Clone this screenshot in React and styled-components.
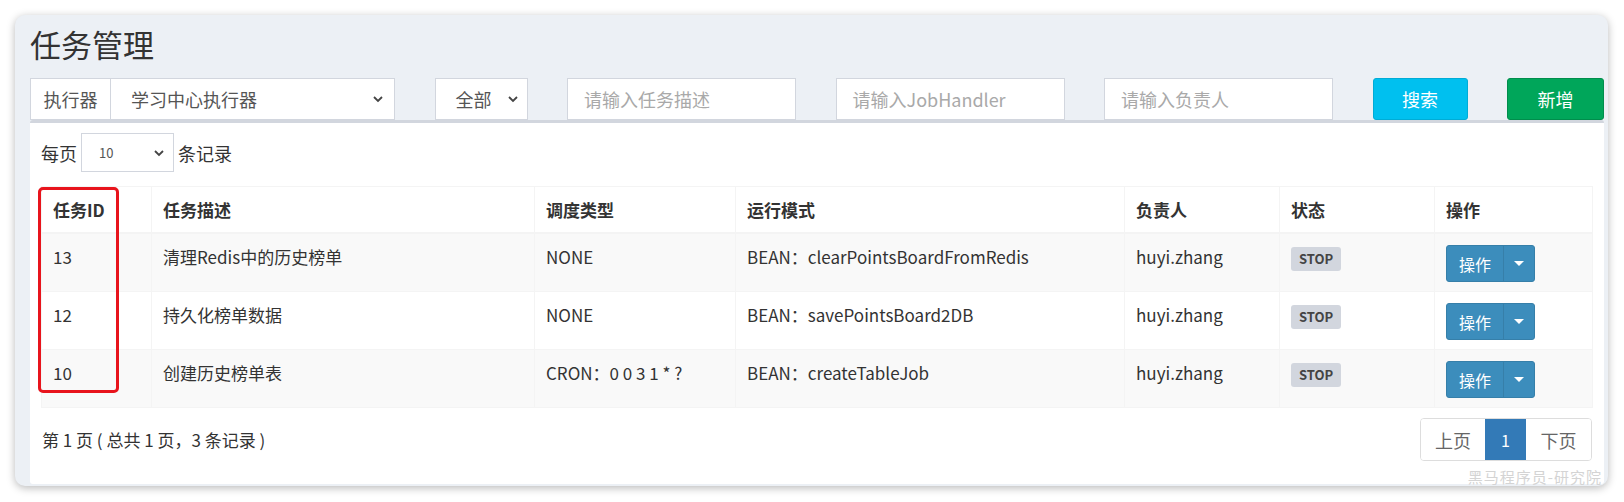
import React from "react";
import styled, { createGlobalStyle } from "styled-components";

const GlobalStyle = createGlobalStyle`
  body {
    margin: 0;
    background: #fff;
    font-family: "Noto Sans CJK SC", "Noto Sans", sans-serif;
    color: #333;
  }
`;

const Page = styled.div`
  padding: 15px 16px 17px 15px;
`;

const Card = styled.div`
  position: relative;
  background: #ecf0f5;
  border-radius: 10px;
  box-shadow: 0 2px 8px rgba(0, 0, 0, 0.28);
  padding: 9px 4px 2px 15px;
`;

const Title = styled.h1`
  margin: 0 0 14px;
  font-size: 31px;
  line-height: 40px;
  font-weight: 400;
  color: #333;
`;

const Filters = styled.div`
  display: flex;
  justify-content: space-between;
  height: 42px;
`;

const Group = styled.div`
  display: flex;
  width: 365px;
`;

const Addon = styled.div`
  width: 81px;
  box-sizing: border-box;
  display: flex;
  align-items: center;
  justify-content: center;
  background: #fff;
  border: 1px solid #d2d6de;
  font-size: 18px;
  color: #555;
`;

const SelectBox = styled.div`
  width: ${(p) => p.$w}px;
  height: ${(p) => p.$h || 42}px;
  box-sizing: border-box;
  display: flex;
  align-items: center;
  justify-content: space-between;
  padding: 0 ${(p) => p.$pr || 10}px 0 ${(p) => p.$pl || 20}px;
  background: #fff;
  border: 1px solid #d2d6de;
  border-left-width: ${(p) => (p.$noLeft ? 0 : 1)}px;
  font-size: ${(p) => p.$fs || 18}px;
  color: #555;
`;

const Input = styled.div`
  width: 229px;
  box-sizing: border-box;
  display: flex;
  align-items: center;
  padding: 0 16px;
  background: #fff;
  border: 1px solid #d2d6de;
  font-size: 18px;
  color: #a9a9a9;
`;

const Button = styled.div`
  width: ${(p) => p.$w}px;
  box-sizing: border-box;
  display: flex;
  align-items: center;
  justify-content: center;
  border-radius: 3px;
  background: ${(p) => p.$bg};
  border: 1px solid ${(p) => p.$bd};
  color: #fff;
  font-size: 18px;
`;

const Box = styled.div`
  background: #fff;
  border-top: 3px solid #d2d6de;
  border-radius: 3px;
  padding: 10px 12px 23px 11px;
`;

const LengthRow = styled.div`
  display: flex;
  align-items: center;
  gap: 4px;
  font-size: 18px;
  color: #333;
  height: 39px;
`;

const TableWrap = styled.div`
  position: relative;
  margin-top: 14px;
`;

const Table = styled.table`
  width: 1551px;
  table-layout: fixed;
  border-collapse: collapse;
  font-size: 17px;
  color: #333;
`;

const Th = styled.th`
  text-align: left;
  font-weight: 700;
  font-size: 17px;
  padding: 11px 11px 10px;
  line-height: 24px;
  border: 1px solid #f4f4f4;
  border-bottom: 2px solid #f4f4f4;
`;

const Tr = styled.tr`
  background: ${(p) => (p.$odd ? "#f9f9f9" : "#fff")};
`;

const Td = styled.td`
  vertical-align: top;
  padding: 11px 11px 9px;
  line-height: 24px;
  height: 37px;
  border: 1px solid #f4f4f4;
  white-space: nowrap;
`;

const Badge = styled.span`
  display: inline-block;
  margin-top: 1px;
  padding: 0 8px;
  height: 24px;
  line-height: 24px;
  border-radius: 3px;
  background: #d2d6de;
  color: #444;
  font-size: 13px;
  font-weight: 700;
`;

const BtnGroup = styled.div`
  display: inline-flex;
  height: 37px;
  border-radius: 3px;
  overflow: hidden;
  background: #3c8dbc;
  border: 1px solid #367fa9;
  box-sizing: border-box;
`;

const BtnMain = styled.div`
  width: 56px;
  display: flex;
  align-items: center;
  justify-content: center;
  color: #fff;
  font-size: 16px;
  border-right: 1px solid #367fa9;
`;

const BtnCaret = styled.div`
  width: 30px;
  display: flex;
  align-items: center;
  justify-content: center;
`;

const Caret = styled.span`
  width: 0;
  height: 0;
  border-left: 5px solid transparent;
  border-right: 5px solid transparent;
  border-top: 5px solid #fff;
`;

const Highlight = styled.div`
  position: absolute;
  left: -3px;
  top: 1px;
  width: 81px;
  height: 206px;
  box-sizing: border-box;
  border: 3px solid #e8141c;
  border-radius: 5px;
  pointer-events: none;
`;

const Footer = styled.div`
  display: flex;
  justify-content: space-between;
  align-items: center;
  margin-top: 10px;
`;

const Info = styled.div`
  font-size: 17px;
  color: #333;
  padding-left: 1px;
`;

const Pager = styled.div`
  display: flex;
  height: 43px;
  border: 1px solid #ddd;
  border-radius: 4px;
  overflow: hidden;
  box-sizing: border-box;
`;

const PageItem = styled.div`
  width: ${(p) => p.$w}px;
  display: flex;
  align-items: center;
  justify-content: center;
  font-size: ${(p) => (p.$active ? 16 : 18)}px;
  color: ${(p) => (p.$active ? "#fff" : "#666")};
  background: ${(p) => (p.$active ? "#337ab7" : "#fff")};
`;

const Watermark = styled.div`
  position: absolute;
  right: 6px;
  bottom: 0;
  font-size: 15px;
  letter-spacing: 1px;
  color: #d4d4d4;
  line-height: 18px;
`;

const Chevron = ({ size = 12 }) => (
  <svg width={size} height={size} viewBox="0 0 12 12">
    <path d="M2 4 L6 8 L10 4" fill="none" stroke="#444" strokeWidth="1.8" />
  </svg>
);

const rows = [
  { id: 13, desc: "清理Redis中的历史榜单", type: "NONE", mode: "BEAN：clearPointsBoardFromRedis" },
  { id: 12, desc: "持久化榜单数据", type: "NONE", mode: "BEAN：savePointsBoard2DB" },
  { id: 10, desc: "创建历史榜单表", type: "CRON：0 0 3 1 * ?", mode: "BEAN：createTableJob" },
];

const cols = [110, 383, 201, 389, 155, 155, 158];
const heads = ["任务ID", "任务描述", "调度类型", "运行模式", "负责人", "状态", "操作"];

export default function App() {
  return (
    <>
      <GlobalStyle />
      <Page>
        <Card>
          <Title>任务管理</Title>
          <Filters>
            <Group>
              <Addon>执行器</Addon>
              <SelectBox $w={284} $noLeft>
                学习中心执行器
                <Chevron />
              </SelectBox>
            </Group>
            <SelectBox $w={93} $pl={20} $pr={8}>
              全部
              <Chevron />
            </SelectBox>
            <Input>请输入任务描述</Input>
            <Input>请输入JobHandler</Input>
            <Input>请输入负责人</Input>
            <Button $w={95} $bg="#00c0ef" $bd="#00acd6">搜索</Button>
            <Button $w={97} $bg="#00a65a" $bd="#008d4c">新增</Button>
          </Filters>
          <Box>
            <LengthRow>
              每页
              <SelectBox $w={93} $h={39} $pl={17} $pr={8} $fs={13}>
                10
                <Chevron />
              </SelectBox>
              条记录
            </LengthRow>
            <TableWrap>
              <Table>
                <colgroup>
                  {cols.map((w, i) => (
                    <col key={i} style={{ width: w }} />
                  ))}
                </colgroup>
                <thead>
                  <tr>
                    {heads.map((h) => (
                      <Th key={h}>{h}</Th>
                    ))}
                  </tr>
                </thead>
                <tbody>
                  {rows.map((r, i) => (
                    <Tr key={r.id} $odd={i % 2 === 0}>
                      <Td>{r.id}</Td>
                      <Td>{r.desc}</Td>
                      <Td>{r.type}</Td>
                      <Td>{r.mode}</Td>
                      <Td>huyi.zhang</Td>
                      <Td>
                        <Badge>STOP</Badge>
                      </Td>
                      <Td>
                        <BtnGroup>
                          <BtnMain>操作</BtnMain>
                          <BtnCaret>
                            <Caret />
                          </BtnCaret>
                        </BtnGroup>
                      </Td>
                    </Tr>
                  ))}
                </tbody>
              </Table>
              <Highlight />
            </TableWrap>
            <Footer>
              <Info>第 1 页 ( 总共 1 页，3 条记录 )</Info>
              <Pager>
                <PageItem $w={64}>上页</PageItem>
                <PageItem $w={41} $active>1</PageItem>
                <PageItem $w={65}>下页</PageItem>
              </Pager>
            </Footer>
          </Box>
          <Watermark>黑马程序员-研究院</Watermark>
        </Card>
      </Page>
    </>
  );
}
